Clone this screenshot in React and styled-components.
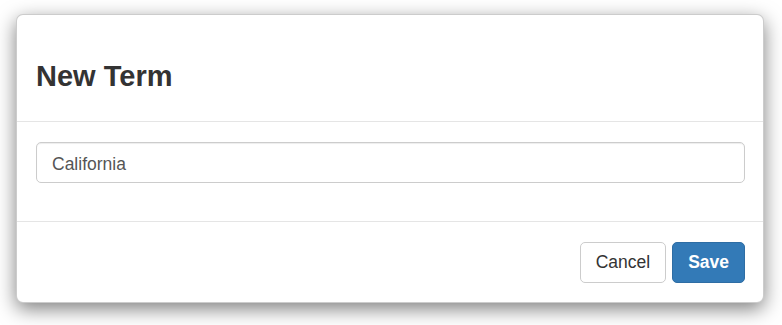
import styled, { createGlobalStyle } from "styled-components";

const GlobalStyle = createGlobalStyle`
  html, body {
    margin: 0;
    padding: 0;
    background: #fff;
  }
  body {
    font-family: "Liberation Sans", Arial, Helvetica, sans-serif;
    color: #333;
  }
  * {
    box-sizing: border-box;
  }
`;

export default function App() {
  return (
    <>
      <GlobalStyle />
      <Page>
        <Modal>
          <Header>
            <Title>New Term</Title>
          </Header>
          <Body>
            <Input type="text" defaultValue="California" />
          </Body>
          <Footer>
            <Button>Cancel</Button>
            <Button primary>Save</Button>
          </Footer>
        </Modal>
      </Page>
    </>
  );
}

const Page = styled.div`
  min-height: 100vh;
  padding: 14px 18px 22px 16px;
`;

const Modal = styled.div`
  width: 748px;
  background: #fff;
  border: 1px solid rgba(0, 0, 0, 0.2);
  border-radius: 7px;
  box-shadow: 0 6px 19px rgba(0, 0, 0, 0.5);
`;

const Header = styled.div`
  padding: 46px 19px 29px;
  border-bottom: 1px solid #e5e5e5;
`;

const Title = styled.h4`
  margin: 0;
  font-size: 29px;
  line-height: 31px;
  font-weight: bold;
  color: #333;
`;

const Body = styled.div`
  padding: 20px 18px 38px 19px;
`;

const Input = styled.input`
  display: block;
  width: 100%;
  height: 41px;
  padding: 4px 15px 0;
  font-family: inherit;
  font-size: 17.5px;
  color: #555;
  background: #fff;
  border: 1px solid #ccc;
  border-radius: 5px;
  box-shadow: inset 0 1px 1px rgba(0, 0, 0, 0.075);
  outline: none;
`;

const Footer = styled.div`
  display: flex;
  justify-content: flex-end;
  gap: 6px;
  padding: 20px 18px 19px 19px;
  border-top: 1px solid #e5e5e5;
`;

const Button = styled.button`
  height: 41px;
  padding: 0 15px;
  font-family: inherit;
  font-size: 17.5px;
  font-weight: ${(p) => (p.primary ? "bold" : "normal")};
  color: ${(p) => (p.primary ? "#fff" : "#333")};
  background: ${(p) => (p.primary ? "#337ab7" : "#fff")};
  border: 1px solid ${(p) => (p.primary ? "#2e6da4" : "#ccc")};
  border-radius: 5px;
  cursor: pointer;
`;
